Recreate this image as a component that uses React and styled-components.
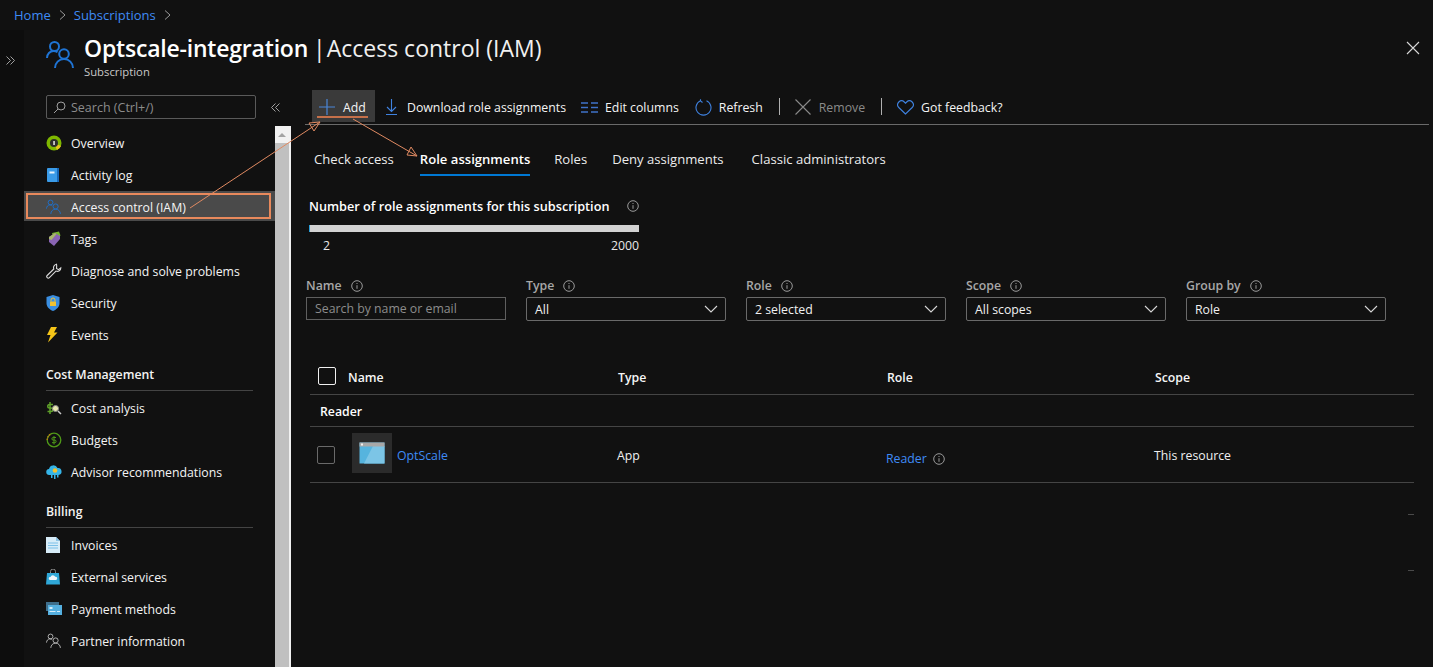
import React from 'react';
import styled, { createGlobalStyle } from 'styled-components';

const GlobalStyle = createGlobalStyle`
  html, body {
    margin: 0;
    padding: 0;
    background: #111111;
  }
  * {
    box-sizing: border-box;
  }
`;

const BLUE = '#3f8bf5';

const PeopleIcon = ({ size = 30, color = '#1f74d4', sw = 2 }) => (
  <svg width={size} height={size} viewBox="0 0 30 30" fill="none" stroke={color} strokeWidth={sw}>
    <circle cx="8.5" cy="6.5" r="4.5" />
    <path d="M1 18c0-4 3-7 6.500-7 1.500 0 2.800.4 4 1.300" />
    <circle cx="18" cy="14" r="4.800" />
    <path d="M9 28c0-5 4-9 9-9s9 4 9 9" />
  </svg>
);

const InfoIcon = ({ color = '#9a9a9a' }) => (
  <svg width="12" height="12" viewBox="0 0 12 12" fill="none" stroke={color}>
    <circle cx="6" cy="6" r="5.300" />
    <path d="M6 5.200v3.600M6 3v1" />
  </svg>
);

const Chevron = () => (
  <svg width="14" height="8" viewBox="0 0 14 8" fill="none" stroke="#d8d8d8" strokeWidth="1.100">
    <path d="M1 1l6 6 6-6" />
  </svg>
);

const DoubleChevron = ({ flip }) => (
  <svg width="9" height="9" viewBox="0 0 9 9" fill="none" stroke="#a0a0a0" style={flip ? { transform: 'scaleX(-1)' } : undefined}>
    <path d="M.5.500l4 4-4 4M4.500.500l4 4-4 4" />
  </svg>
);

const navIcons = {
  overview: (
    <svg width="16" height="16" viewBox="0 0 16 16">
      <circle cx="8" cy="8" r="7.500" fill="#7fb800" />
      <path d="M8 8l7 3a7.500 7.500 0 0 1-4 4z" fill="#e8c21c" />
      <circle cx="8" cy="8" r="4" fill="#2c2c2c" />
      <rect x="7.300" y="6" width="1.500" height="4" fill="#e8e8e8" />
    </svg>
  ),
  activity: (
    <svg width="14" height="16" viewBox="0 0 14 16">
      <rect x="1" y="1" width="12" height="14" rx="1" fill="#3a9be8" />
      <rect x="11" y="1" width="2" height="14" fill="#1667b8" />
      <rect x="3.500" y="4.500" width="5" height="2" fill="#e8f3fc" />
    </svg>
  ),
  access: <PeopleIcon size={16} color="#1f6fc8" sw={1.800} />,
  tags: (
    <svg width="16" height="16" viewBox="0 0 16 16">
      <path d="M6 2l7-1.500 1.500 4-6 5z" fill="#76b82a" />
      <path d="M3 6l6-4 5 3v3l-6 7-5-4z" fill="#8a64b4" />
      <path d="M3 6l6-4 1.500 1-5 6-2.500-1z" fill="#a9b76a" />
    </svg>
  ),
  diagnose: (
    <svg width="16" height="16" viewBox="0 0 16 16" fill="none" stroke="#d8d8d8" strokeWidth="1.100">
      <path d="M10.500 1.200a3.500 3.500 0 0 0-2.700 4.800L1.200 12.500a1.500 1.500 0 0 0 2.200 2.200l6.500-6.600a3.500 3.500 0 0 0 4.900-3.300l-2.300 1.800-2-1.200.2-2.500z" />
    </svg>
  ),
  security: (
    <svg width="14" height="16" viewBox="0 0 14 16">
      <path d="M7 0l6.500 2v6c0 4-3 6.500-6.500 8C3.500 14.500.5 12 .5 8V2z" fill="#3a8ee0" />
      <rect x="4" y="6.500" width="6" height="4.500" rx=".5" fill="#f2c230" />
      <path d="M5 6.500V5a2 2 0 0 1 4 0v1.500" fill="none" stroke="#f2c230" />
    </svg>
  ),
  events: (
    <svg width="12" height="16" viewBox="0 0 12 16">
      <path d="M5 0h6L8 5.500h3.500L2 15.500 4.500 8H1z" fill="#f5c518" />
    </svg>
  ),
  cost: (
    <svg width="16" height="16" viewBox="0 0 16 16" fill="none">
      <path d="M7 4.500H3.500a1.500 1.500 0 0 0 0 3.500h1.500a1.500 1.500 0 0 1 0 3.500H1.500M4 2v12" stroke="#5fa12a" strokeWidth="1.500" />
      <circle cx="9.500" cy="8.500" r="3" fill="#e8e8b0" stroke="#888" />
      <path d="M12 11l3 3" stroke="#c8c8c8" strokeWidth="1.500" />
    </svg>
  ),
  budgets: (
    <svg width="16" height="16" viewBox="0 0 16 16" fill="none">
      <circle cx="8" cy="8" r="6.800" stroke="#4f9a18" strokeWidth="1.300" />
      <path d="M1.200 8a6.800 6.800 0 0 1 4-6.200" stroke="#c77a10" strokeWidth="1.300" strokeDasharray="1.500 1" />
      <path d="M10 5.500H7.200a1.300 1.300 0 0 0 0 2.600h1.600a1.300 1.300 0 0 1 0 2.600H6M8 4v8.500" stroke="#4f9a18" />
    </svg>
  ),
  advisor: (
    <svg width="16" height="16" viewBox="0 0 16 16">
      <path d="M3.500 11a3 3 0 0 1-.5-6 4.500 4.500 0 0 1 8.500-1 3.500 3.500 0 0 1 1 7z" fill="#35b5e8" />
      <circle cx="9" cy="6.500" r="2.300" fill="#f2c230" />
      <rect x="5" y="11" width="1.500" height="3" fill="#35b5e8" />
      <rect x="8" y="11" width="1.500" height="4" fill="#35b5e8" />
      <rect x="11" y="11" width="1.500" height="2.500" fill="#35b5e8" />
    </svg>
  ),
  invoices: (
    <svg width="14" height="16" viewBox="0 0 14 16">
      <path d="M0 0h10l4 4v12H0z" fill="#d7ecf8" />
      <path d="M10 0l4 4h-4z" fill="#8cc4e6" />
      <path d="M2 6h10M2 8.500h10M2 11h10" stroke="#7cc0e8" />
    </svg>
  ),
  external: (
    <svg width="14" height="16" viewBox="0 0 14 16">
      <path d="M4.500 4V2.500a2.500 2.500 0 0 1 5 0V4" fill="none" stroke="#8a8a8a" />
      <path d="M1 4h12l1 11.500H0z" fill="#2fa8d8" />
      <path d="M4 11a1.500 1.500 0 0 1 .5-3 2.500 2.500 0 0 1 4.700-.3A1.700 1.700 0 0 1 10 11z" fill="#eef7fc" />
    </svg>
  ),
  payment: (
    <svg width="16" height="14" viewBox="0 0 16 14">
      <rect x="0" y="0" width="13" height="9" fill="#3f6f8c" />
      <rect x="2" y="3" width="14" height="10" fill="#55b0e0" />
      <rect x="3.500" y="5" width="3" height="2" fill="#d8eefa" />
      <rect x="3.500" y="9" width="6" height="1" fill="#d8eefa" />
      <rect x="11" y="9" width="3" height="1" fill="#d8eefa" />
    </svg>
  ),
  partner: <PeopleIcon size={16} color="#d0d0d0" sw={1.500} />,
};

const Page = styled.div`
  position: relative;
  width: 1433px;
  height: 667px;
  overflow: hidden;
  display: flex;
  flex-direction: column;
  background: #111111;
  color: #ffffff;
  font-family: 'Open Sans', sans-serif;
  font-size: 12.3px;
`;

const Breadcrumb = styled.nav`
  height: 30px;
  flex: none;
  display: flex;
  align-items: center;
  gap: 8px;
  padding-left: 14px;
  color: #9a9a9a;
  font-size: 13px;
`;

const Crumb = styled.a`
  color: ${BLUE};
`;

const Body = styled.div`
  flex: 1;
  display: flex;
  min-height: 0;
`;

const Rail = styled.div`
  width: 24px;
  flex: none;
  background: #0d0d0d;
  padding: 22px 0 0 6px;
`;

const Blade = styled.div`
  flex: 1;
  display: flex;
  flex-direction: column;
  min-width: 0;
`;

const BladeHeader = styled.header`
  height: 60px;
  flex: none;
  display: flex;
  padding: 10px 12px 0 22px;
`;

const HeaderText = styled.div`
  margin: -6px 0 0 8px;
  flex: 1;
`;

const Title = styled.h1`
  display: flex;
  margin: 0;
  font-size: 23px;
  line-height: 28px;
  font-weight: 400;
  color: #f0f0f0;

  b {
    font-weight: 600;
    color: #ffffff;
    letter-spacing: -0.2px;
  }
`;

const Pipe = styled.span`
  margin: 0 1px 0 5px;
`;

const Subtitle = styled.div`
  font-size: 11.3px;
  line-height: 16px;
  margin-top: 2px;
  color: #c8c8c8;
`;

const Close = styled.button`
  width: 16px;
  height: 16px;
  margin-top: 1px;
  padding: 0;
  background: none;
  border: none;
`;

const Columns = styled.div`
  flex: 1;
  display: flex;
  min-height: 0;
`;

const Sidebar = styled.aside`
  width: 266px;
  flex: none;
  display: flex;
  flex-direction: column;
`;

const SearchRow = styled.div`
  height: 37px;
  flex: none;
  display: flex;
  align-items: flex-start;
  padding: 5px 0 0 22px;
`;

const SearchBox = styled.div`
  width: 210px;
  height: 24px;
  display: flex;
  align-items: center;
  gap: 5px;
  padding-left: 6px;
  border: 1px solid #5a5a5a;
  border-radius: 2px;
  font-size: 12.5px;
  color: #8c8c8c;
`;

const Collapse = styled.span`
  display: flex;
  margin: 8px 0 0 15px;
`;

const SideBody = styled.div`
  flex: 1;
  display: flex;
  min-height: 0;
`;

const NavList = styled.ul`
  list-style: none;
  margin: 0;
  padding: 0;
  width: 251px;
  flex: none;
`;

const NavItem = styled.li`
  position: relative;
  height: 32px;
  display: flex;
  align-items: center;
  padding-left: 22px;
  color: #f4f4f4;

  ${(p) => p.$active && `
    background: linear-gradient(#4a4a4a 30px, transparent 30px);

    &::after {
      content: '';
      position: absolute;
      left: 2px;
      right: 4px;
      top: 2px;
      bottom: 4px;
      border: 2px solid #e8895c;
    }
  `}
`;

const NavIcon = styled.span`
  width: 25px;
  flex: none;
  display: flex;
  align-items: center;
`;

const SectionTitle = styled.li`
  margin: 9px 22px 1px;
  height: 31px;
  line-height: 29px;
  font-weight: 600;
  border-bottom: 1px solid #444444;
  color: #f4f4f4;
`;

const Scrollbar = styled.div`
  width: 14px;
  flex: none;
  margin-top: -1px;
  background: #c0c0c0;
  box-shadow: 2px 0 0 #f1f1f1;
`;

const ScrollUp = styled.div`
  height: 17px;
  background: #f1f1f1;
  display: flex;
  align-items: center;
  justify-content: center;

  &::before {
    content: '';
    border: 4px solid transparent;
    border-top: 0;
    border-bottom: 4px solid #a3a3a3;
  }
`;

const Main = styled.main`
  flex: 1;
  min-width: 0;
  padding: 0 0 0 15px;
`;

const Toolbar = styled.div`
  height: 35px;
  width: 1124px;
  display: flex;
  align-items: flex-start;
  border-bottom: 1px solid #6a6a6a;
  padding-left: 7px;
`;

const ToolButton = styled.button`
  position: relative;
  height: 32px;
  padding: 2px 0 0;
  margin-right: ${(p) => p.$mr ?? 15}px;
  display: flex;
  align-items: center;
  gap: ${(p) => p.$gap ?? 8}px;
  background: none;
  border: none;
  font: inherit;
  color: ${(p) => (p.$disabled ? '#8a8a8a' : '#f4f4f4')};
`;

const AddButton = styled(ToolButton)`
  width: 63px;
  padding-left: 7px;
  margin-right: 10px;
  background: #3a3a3a;

  &::after {
    content: '';
    position: absolute;
    left: 5px;
    right: 7px;
    bottom: 4px;
    height: 2px;
    background: #c5704a;
  }
`;

const Sep = styled.span`
  width: 1px;
  height: 17px;
  margin: 8px 15px 0 1px;
  background: #b0b0b0;
`;

const Tabs = styled.div`
  height: 51px;
  margin-left: 9px;
  display: flex;
  align-items: flex-start;
  font-size: 13.1px;
`;

const Tab = styled.div`
  height: 35px;
  margin-top: 16px;
  margin-right: ${(p) => p.$mr}px;
  line-height: 37px;
  white-space: nowrap;
  font-weight: ${(p) => (p.$active ? 600 : 400)};
  color: ${(p) => (p.$active ? '#ffffff' : '#ececec')};
  border-bottom: 2px solid ${(p) => (p.$active ? '#0078d4' : 'transparent')};
`;

const Quota = styled.section`
  width: 330px;
  margin-left: 4px;
  padding-top: 21px;
`;

const QuotaTitle = styled.div`
  display: flex;
  justify-content: space-between;
  align-items: center;
  line-height: 18px;
  font-size: 12.7px;
  font-weight: 600;
`;

const QuotaBar = styled.div`
  height: 7px;
  margin-top: 10px;
  background: #d2d2d2;
  border-left: 1px solid #2d9fd8;
`;

const QuotaScale = styled.div`
  display: flex;
  justify-content: space-between;
  padding-left: 14px;
  margin-top: 6px;
  line-height: 16px;
  color: #e8e8e8;
`;

const Filters = styled.div`
  display: flex;
  gap: 20px;
  margin: 23px 0 0 1px;
`;

const Filter = styled.div`
  width: 200px;
`;

const FilterLabel = styled.div`
  height: 17px;
  display: flex;
  align-items: center;
  gap: 9px;
  margin-bottom: 3px;
  font-weight: 600;
  color: #a8a8a8;
`;

const SearchInput = styled.div`
  height: 23px;
  padding-left: 8px;
  line-height: 21px;
  border: 1px solid #5f5f5f;
  color: #8c8c8c;
`;

const Select = styled.div`
  height: 24px;
  display: flex;
  align-items: center;
  justify-content: space-between;
  padding: 0 7px 0 8px;
  border: 1px solid #6a6a6a;
  border-radius: 2px;
  color: #f0f0f0;
`;

const Table = styled.div`
  width: 1104px;
  margin: 35px 0 0 5px;
`;

const Row = styled.div`
  display: grid;
  grid-template-columns: 38px 270px 269px 268px 1fr;
  align-items: center;
  height: ${(p) => p.$h}px;
  border-bottom: 1px solid #454545;
`;

const HeadCell = styled.div`
  margin-top: 5px;
  font-weight: 600;
  color: #f6f6f6;
`;

const GroupRow = styled.div`
  height: 32px;
  padding-left: 10px;
  line-height: 33px;
  font-weight: 600;
  border-bottom: 1px solid #454545;
`;

const Checkbox = styled.span`
  display: block;
  width: 18px;
  height: 18px;
  margin-left: ${(p) => p.$ml}px;
  margin-top: ${(p) => (p.$strong ? 2 : 0)}px;
  border: 1px solid ${(p) => (p.$strong ? '#f0f0f0' : '#6a6a6a')};
  border-radius: 2px;
`;

const AppCell = styled.div`
  display: flex;
  align-items: center;
  gap: 5px;
  margin-left: 4px;
`;

const AppTile = styled.div`
  width: 40px;
  height: 40px;
  margin-top: -3px;
  display: flex;
  align-items: center;
  justify-content: center;
  background: #2b2b2b;
`;

const Link = styled.a`
  color: ${BLUE};
`;

const AppLink = styled(Link)`
  margin-top: 2px;
`;

const Cell = styled.div`
  margin-left: ${(p) => p.$ml ?? 0}px;
  margin-top: ${(p) => p.$mt ?? 0}px;
  display: flex;
  align-items: center;
  gap: 6px;
  color: #f0f0f0;
`;

const Tick = styled.span`
  position: absolute;
  left: 1408px;
  top: ${(p) => p.$top}px;
  width: 6px;
  height: 1px;
  background: #4a4a4a;
`;

const Annotations = styled.svg`
  position: absolute;
  left: 0;
  top: 0;
  pointer-events: none;
`;

const nav = [
  { icon: 'overview', label: 'Overview' },
  { icon: 'activity', label: 'Activity log' },
  { icon: 'access', label: 'Access control (IAM)', active: true },
  { icon: 'tags', label: 'Tags' },
  { icon: 'diagnose', label: 'Diagnose and solve problems' },
  { icon: 'security', label: 'Security' },
  { icon: 'events', label: 'Events' },
  { section: 'Cost Management' },
  { icon: 'cost', label: 'Cost analysis' },
  { icon: 'budgets', label: 'Budgets' },
  { icon: 'advisor', label: 'Advisor recommendations' },
  { section: 'Billing' },
  { icon: 'invoices', label: 'Invoices' },
  { icon: 'external', label: 'External services' },
  { icon: 'payment', label: 'Payment methods' },
  { icon: 'partner', label: 'Partner information' },
];

const selects = [
  { label: 'Type', value: 'All' },
  { label: 'Role', value: '2 selected' },
  { label: 'Scope', value: 'All scopes' },
  { label: 'Group by', value: 'Role' },
];

const App = () => {
  return (
    <Page>
      <GlobalStyle />
      <Breadcrumb>
        <Crumb>Home</Crumb>
        <svg width="7" height="10" viewBox="0 0 7 10" fill="none" stroke="#9a9a9a"><path d="M1 .5L6 5 1 9.500" /></svg>
        <Crumb>Subscriptions</Crumb>
        <svg width="7" height="10" viewBox="0 0 7 10" fill="none" stroke="#9a9a9a"><path d="M1 .5L6 5 1 9.500" /></svg>
      </Breadcrumb>
      <Body>
        <Rail><DoubleChevron /></Rail>
        <Blade>
          <BladeHeader>
            <PeopleIcon />
            <HeaderText>
              <Title><b>Optscale-integration</b><Pipe>|</Pipe><span>Access control (IAM)</span></Title>
              <Subtitle>Subscription</Subtitle>
            </HeaderText>
            <Close>
              <svg width="14" height="14" viewBox="0 0 14 14" stroke="#d8d8d8" strokeWidth="1.100"><path d="M1 1l12 12M13 1L1 13" /></svg>
            </Close>
          </BladeHeader>
          <Columns>
            <Sidebar>
              <SearchRow>
                <SearchBox>
                  <svg width="13" height="13" viewBox="0 0 13 13" fill="none" stroke="#a0a0a0"><circle cx="8" cy="5" r="4" /><path d="M5 8l-4 4" /></svg>
                  Search (Ctrl+/)
                </SearchBox>
                <Collapse><DoubleChevron flip /></Collapse>
              </SearchRow>
              <SideBody>
                <NavList>
                  {nav.map((item) =>
                    item.section ? (
                      <SectionTitle key={item.section}>{item.section}</SectionTitle>
                    ) : (
                      <NavItem key={item.label} $active={item.active}>
                        <NavIcon>{navIcons[item.icon]}</NavIcon>
                        {item.label}
                      </NavItem>
                    )
                  )}
                </NavList>
                <Scrollbar><ScrollUp /></Scrollbar>
              </SideBody>
            </Sidebar>
            <Main>
              <Toolbar>
                <AddButton>
                  <svg width="16" height="16" viewBox="0 0 16 16" stroke="#4a86d8" strokeWidth="1.200"><path d="M8 0v16M0 8h16" /></svg>
                  Add
                </AddButton>
                <ToolButton $gap={9}>
                  <svg width="13" height="16" viewBox="0 0 13 16" fill="none" stroke="#3f82e0" strokeWidth="1.100"><path d="M6.500 0v12M2 8l4.500 4.500L11 8M1 15.500h11" /></svg>
                  Download role assignments
                </ToolButton>
                <ToolButton $mr={16} $gap={7}>
                  <svg width="17" height="11" viewBox="0 0 17 11" stroke="#3f72c8" strokeWidth="1.300"><path d="M0 1h7M10 1h7M0 5.500h7M10 5.500h7M0 10h7M10 10h7" /></svg>
                  Edit columns
                </ToolButton>
                <ToolButton $gap={7}>
                  <svg width="17" height="17" viewBox="0 0 17 17" fill="none" stroke="#3f82e0" strokeWidth="1.100"><path d="M5.500 1.800a7.500 7.500 0 1 0 6 0M5.500 1.800V.2M5.500 1.800L7.500 3.500" /></svg>
                  Refresh
                </ToolButton>
                <Sep />
                <ToolButton $disabled>
                  <svg width="16" height="16" viewBox="0 0 16 16" stroke="#8a8a8a" strokeWidth="1.100"><path d="M.5.500l15 15M15.500.500l-15 15" /></svg>
                  Remove
                </ToolButton>
                <Sep />
                <ToolButton $gap={7}>
                  <svg width="17" height="15" viewBox="0 0 17 15" fill="none" stroke="#3f82e0" strokeWidth="1.100"><path d="M8.500 14L1.800 7.500a4 4 0 0 1 0-5.500 4 4 0 0 1 5.500 0l1.200 1.200L9.700 2a4 4 0 0 1 5.500 0 4 4 0 0 1 0 5.500z" /></svg>
                  Got feedback?
                </ToolButton>
              </Toolbar>
              <Tabs>
                <Tab $mr={26}>Check access</Tab>
                <Tab $mr={24} $active>Role assignments</Tab>
                <Tab $mr={25}>Roles</Tab>
                <Tab $mr={28}>Deny assignments</Tab>
                <Tab>Classic administrators</Tab>
              </Tabs>
              <Quota>
                <QuotaTitle>
                  Number of role assignments for this subscription
                  <InfoIcon />
                </QuotaTitle>
                <QuotaBar />
                <QuotaScale>
                  <span>2</span>
                  <span>2000</span>
                </QuotaScale>
              </Quota>
              <Filters>
                <Filter>
                  <FilterLabel>Name <InfoIcon /></FilterLabel>
                  <SearchInput>Search by name or email</SearchInput>
                </Filter>
                {selects.map((s) => (
                  <Filter key={s.label}>
                    <FilterLabel>{s.label} <InfoIcon /></FilterLabel>
                    <Select>
                      {s.value}
                      <Chevron />
                    </Select>
                  </Filter>
                ))}
              </Filters>
              <Table>
                <Row $h={39}>
                  <Checkbox $ml={8} $strong />
                  <HeadCell>Name</HeadCell>
                  <HeadCell>Type</HeadCell>
                  <HeadCell>Role</HeadCell>
                  <HeadCell>Scope</HeadCell>
                </Row>
                <GroupRow>Reader</GroupRow>
                <Row $h={56}>
                  <Checkbox $ml={7} />
                  <AppCell>
                    <AppTile>
                      <svg width="26" height="22" viewBox="0 0 26 22">
                        <rect x="0.500" y="0.500" width="25" height="21" fill="#56b4de" />
                        <path d="M14 4h11.500v17.500H5z" fill="#7cc5e6" />
                        <rect x="0.500" y="0.500" width="25" height="4" fill="#a8a8a8" />
                        <rect x="2" y="1.500" width="2" height="2" fill="#f0f0f0" />
                      </svg>
                    </AppTile>
                    <AppLink>OptScale</AppLink>
                  </AppCell>
                  <Cell $ml={-1} $mt={2}>App</Cell>
                  <Cell $ml={-1} $mt={8}><Link>Reader</Link> <InfoIcon /></Cell>
                  <Cell $ml={-1} $mt={2}>This resource</Cell>
                </Row>
              </Table>
            </Main>
          </Columns>
        </Blade>
      </Body>
      <Tick $top={514} />
      <Tick $top={570} />
      <Annotations width="1433" height="667" fill="none" stroke="#e08a62">
        <path d="M190 208L320 122" />
        <path d="M309 123L320 122 314 131z" />
        <path d="M353 119L417 156" />
        <path d="M407 155L417 156 411 147z" />
      </Annotations>
    </Page>
  );
};

export default App;
